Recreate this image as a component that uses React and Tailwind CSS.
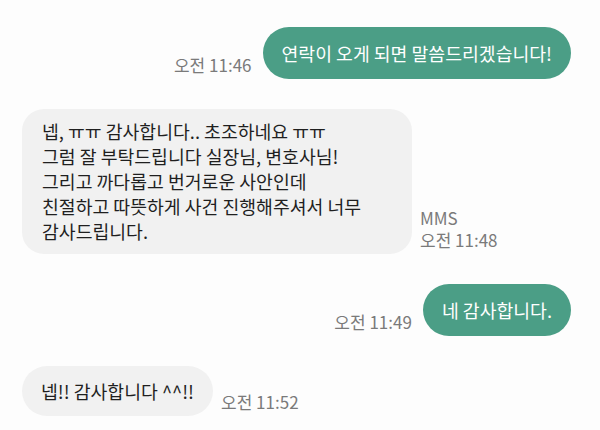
const messages = [
  { id: 1, mine: true, text: "연락이 오게 되면 말씀드리겠습니다!", time: "오전 11:46" },
  {
    id: 2,
    mine: false,
    multi: true,
    text: "넵, ㅠㅠ 감사합니다.. 초조하네요 ㅠㅠ\n그럼 잘 부탁드립니다 실장님, 변호사님!\n그리고 까다롭고 번거로운 사안인데\n친절하고 따뜻하게 사건 진행해주셔서 너무\n감사드립니다.",
    time: "오전 11:48",
    tag: "MMS",
  },
  { id: 3, mine: true, text: "네 감사합니다.", time: "오전 11:49" },
  { id: 4, mine: false, text: "넵!! 감사합니다 ^^!!", time: "오전 11:52" },
];

const Meta = ({ time, tag }) => (
  <div className="mb-[3px] flex flex-col text-[17px] leading-[22px] text-[#7a7a7a] whitespace-nowrap">
    {tag && <span>{tag}</span>}
    <span>{time}</span>
  </div>
);

const Bubble = ({ message }) => {
  if (message.mine) {
    return (
      <div className="rounded-full bg-[#4b9e86] px-[19px] py-[13px] text-[18.3px] leading-[26px] text-white whitespace-nowrap">
        {message.text}
      </div>
    );
  }
  if (message.multi) {
    return (
      <div className="w-[390px] rounded-[22px] bg-[#f1f1f1] px-[20px] py-[10px] text-[18.3px] leading-[25px] text-[#1f1f1f] whitespace-pre-line">
        {message.text}
      </div>
    );
  }
  return (
    <div className="rounded-full bg-[#f1f1f1] px-[19px] py-[12px] text-[18.3px] leading-[26px] text-[#1f1f1f] whitespace-nowrap">
      {message.text}
    </div>
  );
};

export default function App() {
  return (
    <div
      className="flex h-[430px] w-[600px] flex-col gap-[30px] overflow-hidden bg-[#fdfdfd] pl-[22px] pr-[29px] pt-[27px]"
      style={{ fontFamily: '"Noto Sans CJK KR", "Noto Sans", sans-serif' }}
    >
      {messages.map((message) =>
        message.mine ? (
          <div key={message.id} className="flex items-end justify-end gap-[11px]">
            <Meta time={message.time} />
            <Bubble message={message} />
          </div>
        ) : (
          <div key={message.id} className="flex items-end gap-[8px]">
            <Bubble message={message} />
            <Meta time={message.time} tag={message.tag} />
          </div>
        )
      )}
    </div>
  );
}
